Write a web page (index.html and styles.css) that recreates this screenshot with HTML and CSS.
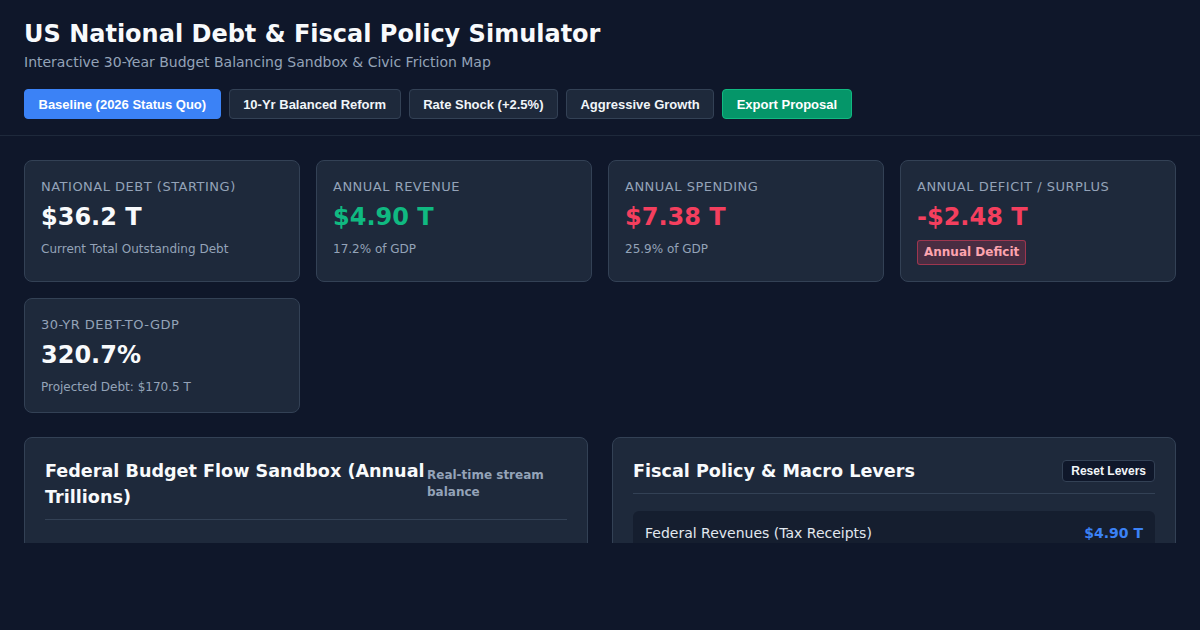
FILE: index.html
```html
<!DOCTYPE html>
<html lang="en">
<head>
<meta charset="utf-8">
<title>US National Debt &amp; Fiscal Policy Simulator</title>
<link rel="stylesheet" href="styles.css">
</head>
<body>
<div class="app">
  <header class="header">
    <h1 class="title">US National Debt &amp; Fiscal Policy Simulator</h1>
    <p class="subtitle">Interactive 30-Year Budget Balancing Sandbox &amp; Civic Friction Map</p>
    <div class="presets">
      <button class="btn btn-active">Baseline (2026 Status Quo)</button>
      <button class="btn">10-Yr Balanced Reform</button>
      <button class="btn">Rate Shock (+2.5%)</button>
      <button class="btn">Aggressive Growth</button>
      <button class="btn btn-export">Export Proposal</button>
    </div>
  </header>
  <main class="main">
    <section class="stats">
      <div class="card">
        <div class="card-label">National Debt (Starting)</div>
        <div class="card-value">$36.2 T</div>
        <div class="card-sub">Current Total Outstanding Debt</div>
      </div>
      <div class="card">
        <div class="card-label">Annual Revenue</div>
        <div class="card-value green">$4.90 T</div>
        <div class="card-sub">17.2% of GDP</div>
      </div>
      <div class="card">
        <div class="card-label">Annual Spending</div>
        <div class="card-value red">$7.38 T</div>
        <div class="card-sub">25.9% of GDP</div>
      </div>
      <div class="card">
        <div class="card-label">Annual Deficit / Surplus</div>
        <div class="card-value red">-$2.48 T</div>
        <div class="card-sub"><span class="badge">Annual Deficit</span></div>
      </div>
      <div class="card">
        <div class="card-label">30-Yr Debt-to-GDP</div>
        <div class="card-value">320.7%</div>
        <div class="card-sub">Projected Debt: $170.5 T</div>
      </div>
    </section>
    <section class="panels">
      <div class="panel">
        <div class="panel-head">
          <h2 class="panel-title">Federal Budget Flow Sandbox (Annual Trillions)</h2>
          <span class="panel-note">Real-time stream balance</span>
        </div>
      </div>
      <div class="panel">
        <div class="panel-head">
          <h2 class="panel-title">Fiscal Policy &amp; Macro Levers</h2>
          <button class="btn-small">Reset Levers</button>
        </div>
        <div class="lever">
          <div class="lever-row">
            <span class="lever-name">Federal Revenues (Tax Receipts)</span>
            <span class="lever-value">$4.90 T</span>
          </div>
          <input class="slider" type="range" min="3" max="9" step="0.01" value="4.9">
        </div>
      </div>
    </section>
  </main>
</div>
</body>
</html>
```
FILE: styles.css
```css
* { box-sizing: border-box; }
html, body {
  margin: 0;
  background: #0f172a;
}
body {
  font-family: "DejaVu Sans", Verdana, sans-serif;
  color: #f1f5f9;
}
.app {
  height: 543px;
  overflow: hidden;
}
.header {
  padding: 20px 24px 16px;
  border-bottom: 1px solid #1e293b;
}
.title {
  margin: 0;
  font-size: 24px;
  line-height: 28px;
  font-weight: 700;
  color: #f8fafc;
}
.subtitle {
  margin: 4px 0 0;
  font-size: 14px;
  line-height: 20px;
  color: #94a3b8;
}
.presets {
  display: flex;
  gap: 8px;
  margin-top: 17px;
}
.btn {
  font-family: "Liberation Sans", Arial, sans-serif;
  font-weight: 700;
  font-size: 13px;
  height: 30px;
  padding: 0 13.5px;
  border-radius: 4px;
  border: 1px solid #334155;
  background: #1e293b;
  color: #f1f5f9;
}
.btn-active {
  background: #3b82f6;
  border-color: #3b82f6;
  color: #ffffff;
}
.btn-export {
  background: #059669;
  border-color: #10b981;
  color: #ffffff;
}
.main {
  padding: 24px;
}
.stats {
  display: grid;
  grid-template-columns: repeat(4, 1fr);
  gap: 16px;
}
.card {
  background: #1e293b;
  border: 1px solid #334155;
  border-radius: 8px;
  padding: 16px;
}
.card-label {
  font-size: 13px;
  line-height: 18px;
  letter-spacing: 0.5px;
  text-transform: uppercase;
  color: #94a3b8;
  padding-top: 1px;
}
.card-value {
  margin-top: 6px;
  font-size: 24px;
  line-height: 30px;
  font-weight: 700;
  color: #f8fafc;
}
.card-value.green { color: #10b981; }
.card-value.red { color: #f43f5e; }
.card-sub {
  margin-top: 8px;
  font-size: 12px;
  line-height: 18px;
  color: #94a3b8;
}
.badge {
  display: inline-block;
  padding: 4px 6px;
  font-size: 12px;
  line-height: 15px;
  font-weight: 700;
  color: #fda4af;
  background: rgba(244, 63, 94, 0.2);
  border: 1px solid rgba(244, 63, 94, 0.5);
  border-radius: 3px;
}
.panels {
  display: grid;
  grid-template-columns: 1fr 1fr;
  gap: 24px;
  margin-top: 24px;
}
.panel {
  background: #1e293b;
  border: 1px solid #334155;
  border-radius: 8px;
  padding: 20px;
  min-height: 300px;
}
.panel-head {
  display: flex;
  justify-content: space-between;
  align-items: center;
  padding-bottom: 9px;
  border-bottom: 1px solid #334155;
}
.panel-title {
  flex: 1 1 auto;
  min-width: 0;
  margin: 0;
  font-size: 17.6px;
  line-height: 26px;
  font-weight: 700;
  color: #f8fafc;
}
.panel-note {
  flex: 0 0 140px;
  font-size: 12px;
  line-height: 17px;
  font-weight: 700;
  color: #94a3b8;
}
.btn-small {
  flex: 0 0 auto;
  font-family: "Liberation Sans", Arial, sans-serif;
  font-size: 12px;
  font-weight: 700;
  height: 22px;
  padding: 0 8px;
  border-radius: 4px;
  border: 1px solid #334155;
  background: #0f172a;
  color: #f1f5f9;
}
.lever {
  margin-top: 17px;
  background: #151e2f;
  border-radius: 6px;
  padding: 12px;
}
.lever-row {
  display: flex;
  justify-content: space-between;
  align-items: center;
  line-height: 20px;
}
.lever-name {
  font-size: 14px;
  color: #e2e8f0;
}
.lever-value {
  font-size: 14px;
  font-weight: 700;
  color: #3b82f6;
}
.slider {
  -webkit-appearance: none;
  appearance: none;
  display: block;
  width: 100%;
  height: 16px;
  margin: 0;
  background: transparent;
}
.slider::-webkit-slider-runnable-track {
  height: 6px;
  background: #334155;
  border-radius: 3px;
}
.slider::-webkit-slider-thumb {
  -webkit-appearance: none;
  width: 16px;
  height: 16px;
  margin-top: -5px;
  border-radius: 50%;
  background: #3b82f6;
  border: none;
}
```
